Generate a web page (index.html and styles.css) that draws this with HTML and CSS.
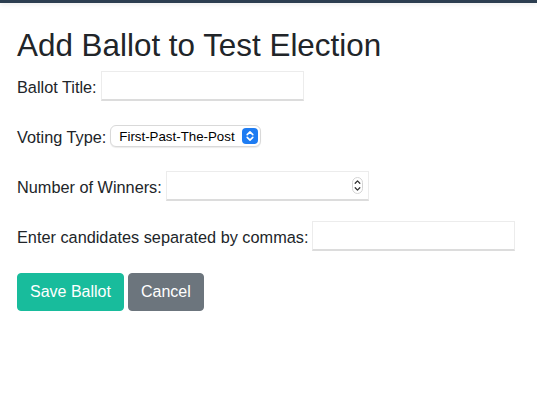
FILE: index.html
```html
<!DOCTYPE html>
<html lang="en">
<head>
<meta charset="utf-8">
<title>Add Ballot</title>
<link rel="stylesheet" href="styles.css">
</head>
<body>
<div class="topbar"></div>
<main class="container">
  <h2 class="title">Add Ballot to Test Election</h2>
  <form class="ballot-form">
    <div class="row">
      <label class="lbl">Ballot Title:</label>
      <span class="field"></span>
    </div>
    <div class="row">
      <label class="lbl">Voting Type:</label>
      <span class="select">
        <span class="select-text">First-Past-The-Post</span>
        <span class="select-arrow">
          <svg width="16" height="16" viewBox="0 0 16 16">
            <rect x="0" y="0" width="16" height="16" rx="4" fill="#1e7cf2"/>
            <path d="M5.2 6.6 L8 3.9 L10.8 6.6" fill="none" stroke="#fff" stroke-width="1.6" stroke-linecap="round" stroke-linejoin="round"/>
            <path d="M5.2 9.4 L8 12.1 L10.8 9.4" fill="none" stroke="#fff" stroke-width="1.6" stroke-linecap="round" stroke-linejoin="round"/>
          </svg>
        </span>
      </span>
    </div>
    <div class="row">
      <label class="lbl">Number of Winners:</label>
      <span class="field number">
        <svg class="spinner" width="11" height="17" viewBox="0 0 11 17">
          <rect x="0.5" y="0.5" width="10" height="16" rx="5" fill="#fff" stroke="#d4d4d4"/>
          <path d="M3.2 6.2 L5.5 3.9 L7.8 6.2" fill="none" stroke="#333" stroke-width="1.3" stroke-linecap="round" stroke-linejoin="round"/>
          <path d="M3.2 10.8 L5.5 13.1 L7.8 10.8" fill="none" stroke="#333" stroke-width="1.3" stroke-linecap="round" stroke-linejoin="round"/>
        </svg>
      </span>
    </div>
    <div class="row">
      <label class="lbl">Enter candidates separated by commas:</label>
      <span class="field"></span>
    </div>
    <div class="actions">
      <button type="button" class="btn btn-success">Save Ballot</button>
      <button type="button" class="btn btn-secondary">Cancel</button>
    </div>
  </form>
</main>
</body>
</html>
```
FILE: styles.css
```css
html, body {
  margin: 0;
  padding: 0;
  background: #fff;
}
body {
  font-family: "Liberation Sans", Arial, sans-serif;
  color: #212529;
  font-size: 16px;
}
.topbar {
  height: 3px;
  background: #2c3e50;
  box-shadow: 0 1px 5px rgba(0, 0, 0, 0.12);
}
.container {
  padding: 0 17px;
}
.title {
  margin: 24px 0 0;
  font-size: 31.4px;
  font-weight: 500;
  line-height: 38px;
  color: #212529;
}
.ballot-form {
  display: flex;
  flex-direction: column;
  margin-top: 6px;
}
.row {
  display: flex;
  align-items: center;
  gap: 4px;
  height: 30px;
  margin-bottom: 20px;
}
.lbl {
  font-size: 16.3px;
  line-height: 1;
  padding-top: 2px;
}
.field {
  box-sizing: border-box;
  width: 203px;
  height: 30px;
  background: #fff;
  border: 1px solid #ececec;
  border-bottom: 2px solid #dcdcdc;
  display: flex;
  align-items: center;
  justify-content: flex-end;
}
.field.number {
  padding-right: 5px;
}
.spinner {
  display: block;
}
.select {
  box-sizing: border-box;
  display: flex;
  align-items: center;
  width: 151px;
  height: 22px;
  border: 1px solid #d9d9d9;
  border-radius: 6px;
  box-shadow: 0 1px 1px rgba(0, 0, 0, 0.08);
  padding: 0 2px 0 8px;
  background: #fff;
}
.select-text {
  flex: 1;
  min-width: 0;
  font-size: 13.3px;
  color: #000;
  white-space: nowrap;
  overflow: hidden;
  margin-right: 3px;
}
.select-arrow {
  display: flex;
  flex-shrink: 0;
}
.actions {
  display: flex;
  gap: 4px;
  margin-top: 2px;
}
.btn {
  font-family: "Liberation Sans", Arial, sans-serif;
  font-size: 16px;
  line-height: 24px;
  padding: 6px 12px;
  border: 1px solid transparent;
  border-radius: 4px;
  color: #fff;
}
.btn-success {
  background: #18bc9c;
  border-color: #18bc9c;
}
.btn-secondary {
  background: #6c757d;
  border-color: #6c757d;
}
```
